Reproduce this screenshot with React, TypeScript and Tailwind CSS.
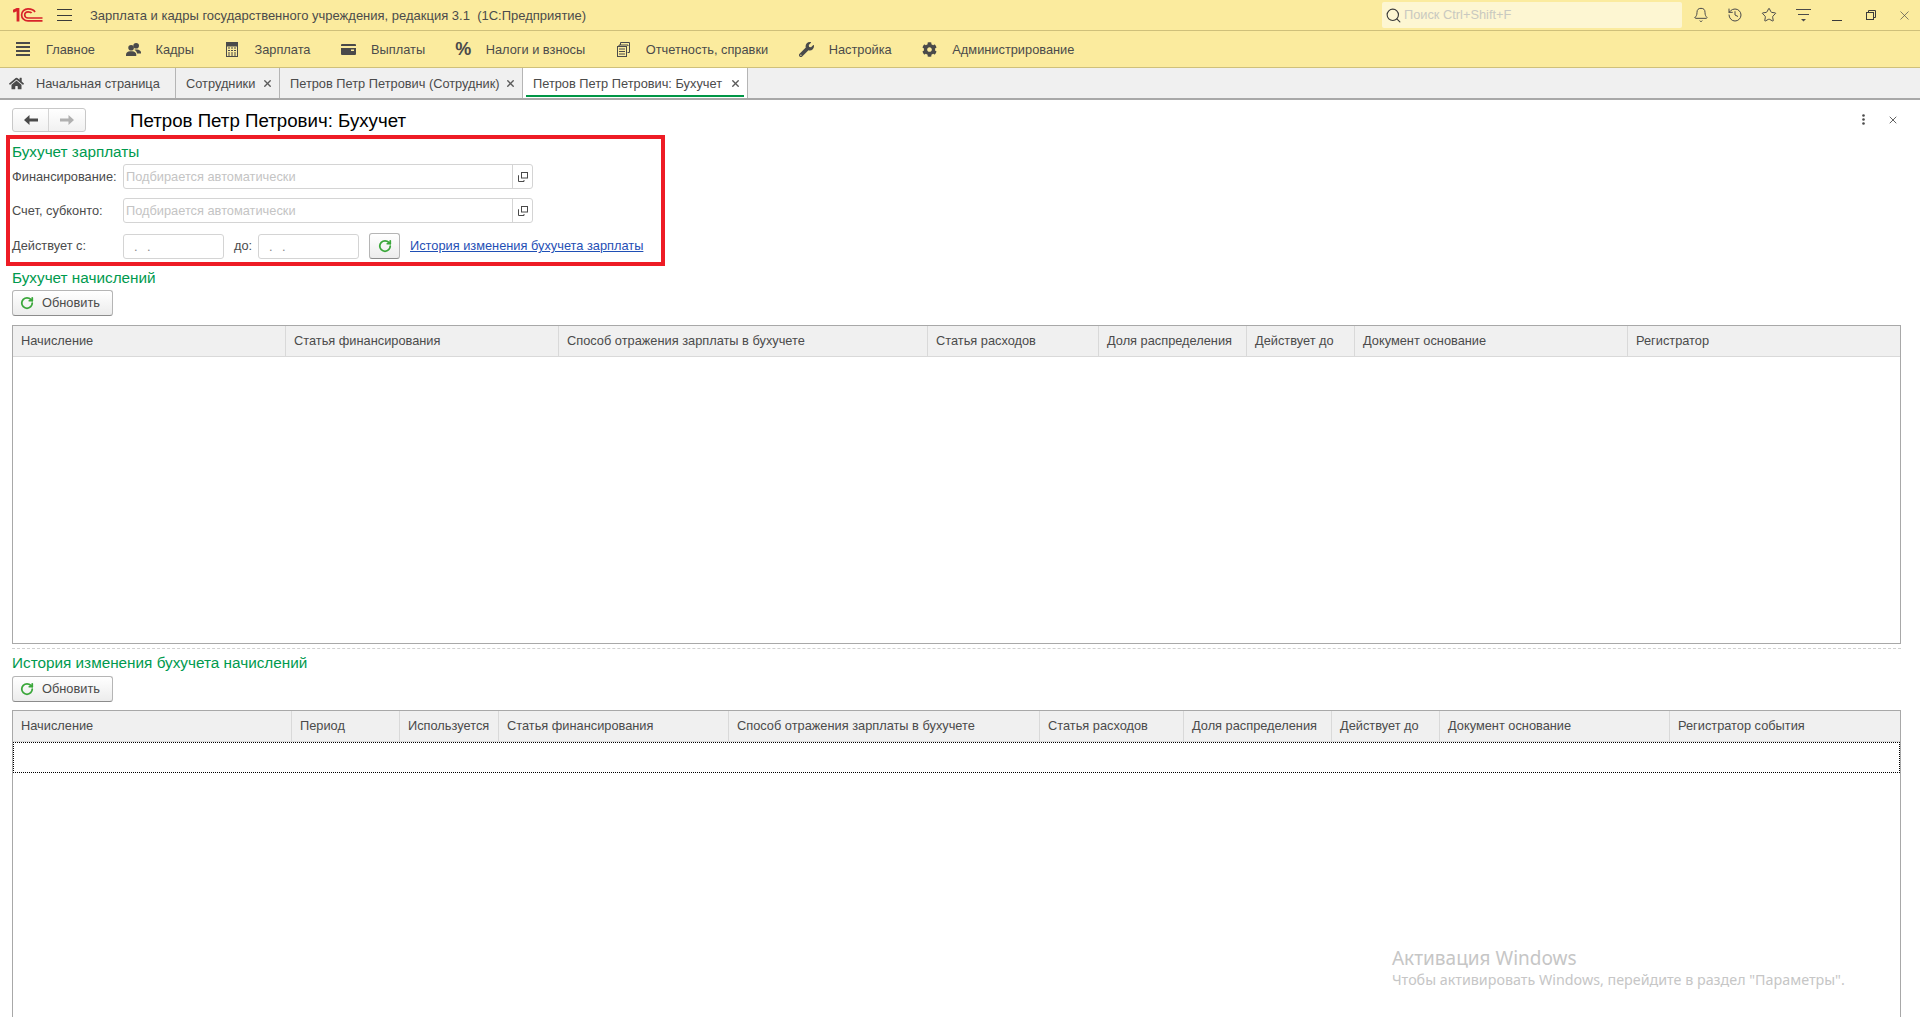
import { Bell, History, Star, X, Search, RotateCw } from 'lucide-react';
import { FaCog, FaHome, FaWrench } from 'react-icons/fa';
import type { ReactNode } from 'react';

const navItems: { label: string; icon: ReactNode }[] = [
  { label: 'Главное', icon: <MenuLines /> },
  { label: 'Кадры', icon: <PeopleIcon /> },
  { label: 'Зарплата', icon: <CalcIcon /> },
  { label: 'Выплаты', icon: <CardIcon /> },
  { label: 'Налоги и взносы', icon: <span className="text-[18px] font-bold leading-none">%</span> },
  { label: 'Отчетность, справки', icon: <DocsIcon /> },
  { label: 'Настройка', icon: <FaWrench size={15} /> },
  { label: 'Администрирование', icon: <FaCog size={15} /> },
];

const accrualCols = [
  'Начисление',
  'Статья финансирования',
  'Способ отражения зарплаты в бухучете',
  'Статья расходов',
  'Доля распределения',
  'Действует до',
  'Документ основание',
  'Регистратор',
];

const historyCols = [
  'Начисление',
  'Период',
  'Используется',
  'Статья финансирования',
  'Способ отражения зарплаты в бухучете',
  'Статья расходов',
  'Доля распределения',
  'Действует до',
  'Документ основание',
  'Регистратор события',
];

function Logo() {
  return (
    <svg width="30" height="14" viewBox="0 0 30 14" fill="none" stroke="#d8232a" strokeWidth="1.7">
      <path d="M0 3.400 5 .9V13.600" strokeWidth="2.800" />
      <path d="M22 4C21 2 18.500.9 15 .9c-3.600 0-6.400 2.700-6.400 6s2.800 6 6.400 6H29.500" />
      <path d="M18.600 5C18 4 16.500 3.800 15 3.800c-1.800 0-3.300 1.400-3.300 3.100S13.200 10 15 10H29.500" />
    </svg>
  );
}

function MenuLines() {
  return (
    <svg width="15" height="14" viewBox="0 0 15 14" fill="#4a4a4a">
      <rect y="0" width="14" height="2" />
      <rect y="4" width="14" height="2" />
      <rect y="8" width="14" height="2" />
      <rect y="12" width="14" height="2" />
    </svg>
  );
}

function PeopleIcon() {
  return (
    <svg width="17" height="15" viewBox="0 0 17 15" fill="#4a4a4a">
      <circle cx="11.500" cy="3.200" r="3.200" />
      <path d="M11 7.500h1.500c2.500 0 4.500 1.500 4.500 3.500v1h-4.500c-.3-1.800-1.300-3.300-3-4.200.5-.2 1-.3 1.500-.3Z" />
      <circle cx="5.800" cy="5.500" r="3.200" />
      <path d="M0 15v-1.700c0-2.300 2-3.800 4.500-3.800h2.600c2.500 0 4.500 1.500 4.500 3.800V15Z" />
    </svg>
  );
}

function CalcIcon() {
  return (
    <svg width="14" height="15" viewBox="0 0 14 15" fill="none" stroke="#4a4a4a">
      <rect x="1.500" y="0.500" width="11" height="14" strokeWidth="1" />
      <rect x="1.500" y="0.500" width="11" height="3.500" fill="#4a4a4a" />
      <path d="M3 6h8M3 8.500h8M3 11h8M3 13h8" strokeWidth="1.200" strokeDasharray="2 1" />
    </svg>
  );
}

function CardIcon() {
  return (
    <svg width="15" height="11" viewBox="0 0 15 11" fill="#4a4a4a">
      <path d="M1 0h13a1 1 0 0 1 1 1v1H0V1a1 1 0 0 1 1-1Z" />
      <path d="M0 4h15v6a1 1 0 0 1-1 1H1a1 1 0 0 1-1-1Zm10 1.500V7h3V5.500Z" fillRule="evenodd" />
    </svg>
  );
}

function DocsIcon() {
  return (
    <svg width="13" height="15" viewBox="0 0 13 15" fill="none" stroke="#4a4a4a">
      <path d="M3.500 3V.5h9v10H10.500M2 4.500V3h9v1" />
      <rect x="0.500" y="4.500" width="9" height="10" />
      <path d="M2 7h6M2 9.500h6M2 12h6" />
    </svg>
  );
}

function OpenIcon() {
  return (
    <svg width="10" height="10" viewBox="0 0 10 10" fill="none" stroke="#4a4a4a">
      <rect x="3.500" y="0.500" width="6" height="5.500" strokeWidth="1" />
      <path d="M1 3.500H.5v6H6V8" />
    </svg>
  );
}

function Refresh({ size = 14 }: { size?: number }) {
  return <RotateCw size={size} strokeWidth={3} className="text-[#3aa73a]" />;
}

function RefreshButton() {
  return (
    <button className="flex h-[26px] w-[101px] items-center gap-[8px] rounded-[3px] border border-[#b5b5b5] border-b-[#8c8c8c] bg-gradient-to-b from-white to-[#ececec] pl-[7px] text-[#4b4b4b]">
      <Refresh />
      <span>Обновить</span>
    </button>
  );
}

function SelectField({ label }: { label: string }) {
  return (
    <div className="flex h-[25px] items-center">
      <span className="w-[111px] text-[#4b4b4b]">{label}</span>
      <div className="flex h-full w-[410px] rounded-[3px] border border-[#d4d4d4] bg-white">
        <span className="flex-1 pl-[2px] leading-[23px] text-[#c4c4c4]">Подбирается автоматически</span>
        <span className="flex w-[20px] items-center justify-center border-l border-[#d4d4d4]">
          <OpenIcon />
        </span>
      </div>
    </div>
  );
}

function DateField() {
  return (
    <div className="h-[25px] w-[101px] rounded-[3px] border border-[#d4d4d4] bg-white pl-[10px] leading-[23px] tracking-[3px] text-[#8a8a8a]">
      . .
    </div>
  );
}

function SectionTitle({ children }: { children: ReactNode }) {
  return <div className="text-[15.3px] leading-[22px] text-[#009a4e]">{children}</div>;
}

function HeaderRow({ cols, template }: { cols: string[]; template: string }) {
  return (
    <div className={`grid h-[31px] border-b border-[#d9d9d9] bg-[#f0f0f0] ${template}`}>
      {cols.map((c, i) => (
        <div
          key={c + i}
          className="truncate border-r border-[#d9d9d9] pl-[8px] leading-[30px] text-[#4b4b4b] last:border-r-0"
        >
          {c}
        </div>
      ))}
    </div>
  );
}

function Tab({ width, label, active }: { width: string; label: string; active?: boolean }) {
  return (
    <div className={`relative flex items-center justify-between border-r border-[#b5b5b5] pl-[10px] pr-[6px] ${width} ${active ? 'bg-white' : ''}`}>
      <span className="pt-[1px]">{label}</span>
      <X size={11} strokeWidth={3} className="text-[#5a5a5a]" />
      {active && <i className="absolute bottom-[1px] left-[3px] right-[3px] h-[2px] bg-[#009646]" />}
    </div>
  );
}

export default function App() {
  return (
    <div className="relative h-[1017px] w-[1920px] overflow-hidden bg-white font-['Liberation_Sans',Arial,sans-serif] text-[12.8px] text-[#4b4b4b]">
      {/* Title bar */}
      <header className="flex h-[31px] items-center border-b border-[#cfc07a] bg-[#fbeb9e]">
        <div className="ml-[13px]">
          <Logo />
        </div>
        <div className="ml-[14px] flex h-[12px] w-[15px] flex-col justify-between">
          <i className="h-px bg-[#3a3a3a]" />
          <i className="h-px bg-[#3a3a3a]" />
          <i className="h-px bg-[#3a3a3a]" />
        </div>
        <span className="ml-[18px] pt-[1px] text-[13px]">Зарплата и кадры государственного учреждения, редакция 3.1&nbsp; (1С:Предприятие)</span>
        <div className="ml-auto flex items-center">
          <div className="flex h-[26px] w-[300px] items-center gap-[2px] rounded-[2px] bg-[#fdf6d2] pl-[3px] text-[#c9c9c0]">
            <Search size={17} strokeWidth={1.6} className="text-[#3a3a3a]" />
            Поиск Ctrl+Shift+F
          </div>
          <div className="ml-[2px] flex items-center text-[#4a4a4a]">
            <span className="flex w-[34px] justify-center"><Bell size={16} strokeWidth={1.5} /></span>
            <span className="flex w-[34px] justify-center"><History size={16} strokeWidth={1.5} /></span>
            <span className="flex w-[34px] justify-center"><Star size={16} strokeWidth={1.5} /></span>
            <span className="flex w-[34px] justify-center">
              <svg width="15" height="14" viewBox="0 0 15 14" fill="#4a4a4a">
                <rect width="15" height="1" y="1" />
                <rect x="2" width="11" height="1" y="6" />
                <path d="M5 11h5l-2.500 2.500Z" />
              </svg>
            </span>
            <span className="flex w-[34px] justify-center pt-[11px]"><i className="h-px w-[10px] bg-[#3a3a3a]" /></span>
            <span className="flex w-[34px] justify-center">
              <svg width="10" height="10" viewBox="0 0 10 10" fill="none" stroke="#3a3a3a">
                <rect x="0.500" y="2.500" width="7" height="7" />
                <path d="M2.500 2.500V.5h7v7h-2" />
              </svg>
            </span>
            <span className="flex w-[32px] justify-center"><X size={15} strokeWidth={1.1} /></span>
          </div>
        </div>
      </header>

      {/* Sections menu */}
      <nav className="flex h-[37px] items-center gap-[30.6px] border-b border-[#cfc07a] bg-[#fbeb9e] pl-[16px]">
        {navItems.map((item) => (
          <div key={item.label} className="flex items-center gap-[15px]">
            <span className="flex w-[15px] justify-center text-[#4a4a4a]">{item.icon}</span>
            <span className="pt-[1px]">{item.label}</span>
          </div>
        ))}
      </nav>

      {/* Open tabs */}
      <div className="flex h-[32px] border-b-2 border-[#a8a8a8] bg-[#f0f0f0]">
        <div className="flex w-[176px] items-center gap-[12px] border-r border-[#b5b5b5] pl-[9px]">
          <FaHome size={15} className="text-[#4a4a4a]" />
          <span className="pt-[1px]">Начальная страница</span>
        </div>
        <Tab width="w-[104px]" label="Сотрудники" />
        <Tab width="w-[243px]" label="Петров Петр Петрович (Сотрудник)" />
        <Tab width="w-[225px]" label="Петров Петр Петрович: Бухучет" active />
      </div>

      {/* Form */}
      <main className="pl-3 pr-[19px]">
        <div className="flex h-[35px] items-center pt-[4px]">
          <div className="flex h-[24px] w-[74px] rounded-[3px] border border-[#c8c8c8] bg-gradient-to-b from-white to-[#f1f1f1]">
            <span className="flex w-[36px] items-center justify-center border-r border-[#d4d4d4]">
              <svg width="14" height="10" viewBox="0 0 14 10" fill="#4a4a4a"><path d="M5.500 0 0 5l5.500 5V6.500H14v-3H5.500Z" /></svg>
            </span>
            <span className="flex flex-1 items-center justify-center">
              <svg width="14" height="10" viewBox="0 0 14 10" fill="#b0b0b0"><path d="M8.500 0 14 5l-5.500 5V6.500H0v-3h8.500Z" /></svg>
            </span>
          </div>
          <h1 className="ml-[44px] mt-[3px] text-[18.7px] font-normal text-black">Петров Петр Петрович: Бухучет</h1>
          <div className="ml-auto mr-[2px] flex items-center gap-[22px]">
            <svg width="3" height="11" viewBox="0 0 3 11" fill="#4a4a4a">
              <circle cx="1.500" cy="1.500" r="1.300" />
              <circle cx="1.500" cy="5.500" r="1.300" />
              <circle cx="1.500" cy="9.500" r="1.300" />
            </svg>
            <X size={12} strokeWidth={1.6} className="text-[#3a3a3a]" />
          </div>
        </div>

        {/* Payroll accounting */}
        <section className="relative h-[132px]">
          <div className="pointer-events-none absolute -left-[6px] top-0 h-[131px] w-[659px] border-4 border-[#ee1c25]" />
          <div className="pt-[6px]">
            <SectionTitle>Бухучет зарплаты</SectionTitle>
          </div>
          <div className="mt-[1px] flex flex-col gap-[9px]">
            <SelectField label="Финансирование:" />
            <SelectField label="Счет, субконто:" />
          </div>
          <div className="mt-[10px] flex h-[26px] items-center">
            <span className="w-[111px]">Действует с:</span>
            <DateField />
            <span className="ml-[10px] w-[24px]">до:</span>
            <DateField />
            <button className="ml-[10px] flex h-[26px] w-[31px] items-center justify-center rounded-[3px] border border-[#b5b5b5] border-b-[#8c8c8c] bg-gradient-to-b from-white to-[#ececec]">
              <Refresh />
            </button>
            <a className="ml-[10px] text-[#1f4fb5] underline">История изменения бухучета зарплаты</a>
          </div>
        </section>

        {/* Accruals */}
        <SectionTitle>Бухучет начислений</SectionTitle>
        <div className="mt-[1px]">
          <RefreshButton />
        </div>
        <div className="mt-[9px] h-[319px] border border-[#a8a8a8]">
          <HeaderRow
            cols={accrualCols}
            template="grid-cols-[273px_273px_369px_171px_148px_108px_273px_1fr]"
          />
        </div>

        <div className="mt-[4px] border-t border-dashed border-[#d0d0d0]" />

        {/* Accrual history */}
        <div className="mt-[3px]">
          <SectionTitle>История изменения бухучета начислений</SectionTitle>
        </div>
        <div className="mt-[2px]">
          <RefreshButton />
        </div>
        <div className="mt-[8px] h-[400px] border border-[#a8a8a8]">
          <HeaderRow
            cols={historyCols}
            template="grid-cols-[279px_108px_99px_230px_311px_144px_148px_108px_230px_1fr]"
          />
          <div className="h-[31px] border border-dotted border-black" />
        </div>
      </main>

      {/* Windows watermark */}
      <div className="pointer-events-none absolute left-[1392px] top-[946px] font-['Noto_Sans',sans-serif] text-[#c6c6c6]">
        <div className="text-[19px] leading-[24px]">Активация Windows</div>
        <div className="text-[14.3px] leading-[20px]">Чтобы активировать Windows, перейдите в раздел "Параметры".</div>
      </div>
    </div>
  );
}
